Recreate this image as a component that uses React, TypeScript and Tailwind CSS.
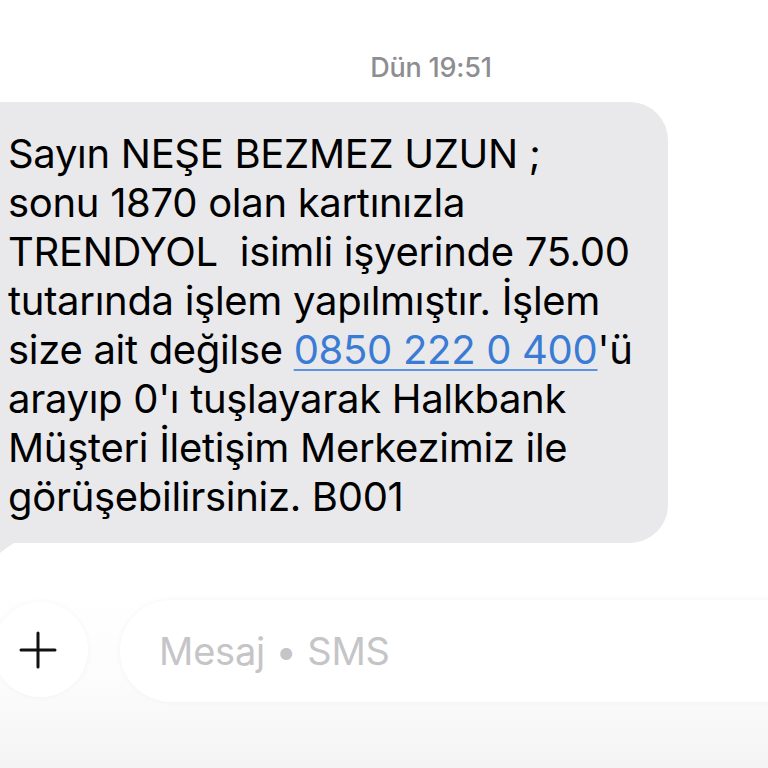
import React from "react";

const lines: React.ReactNode[] = [
  "Sayın NEŞE BEZMEZ UZUN ;",
  "sonu 1870 olan kartınızla",
  "TRENDYOL  isimli işyerinde 75.00",
  "tutarında işlem yapılmıştır. İşlem",
  <>
    size ait değilse{" "}
    <span className="text-[#3a7bd5] underline decoration-[2px] underline-offset-[5px] decoration-[#5b93e0]">
      0850 222 0 400
    </span>
    'ü
  </>,
  "arayıp 0'ı tuşlayarak Halkbank",
  "Müşteri İletişim Merkezimiz ile",
  "görüşebilirsiniz. B001",
];

export default function App() {
  return (
    <div
      className="relative w-[768px] h-[768px] overflow-hidden bg-white flex flex-col"
      style={{ fontFamily: 'Inter, "Liberation Sans", Arial, sans-serif' }}
    >
      <div className="pt-[50px] h-[102px] flex justify-center pl-[94px]">
        <span className="text-[27px] leading-[36px] font-medium text-[#8d8d92] tracking-[-0.2px]">
          Dün 19:51
        </span>
      </div>

      <div className="relative">
        <div className="ml-[-40px] w-[708px] bg-[#e9e9eb] rounded-[38px] pl-[48px] pt-[27px] pb-[22px]">
          {lines.map((l, i) => (
            <div
              key={i}
              className="whitespace-pre text-[40px] leading-[49px] text-black tracking-[-0.3px]"
            >
              {l}
            </div>
          ))}
        </div>
        <svg
          className="absolute left-0 bottom-[-14px]"
          width="28"
          height="20"
          viewBox="0 0 28 20"
        >
          <path d="M0 0 H28 C18 2 8 10 0 16 Z" fill="#e9e9eb" />
        </svg>
      </div>

      <div className="mt-auto h-[178px] bg-gradient-to-b from-[#ffffff] via-[#fcfcfc] to-[#f4f4f4] flex items-start pt-[12px]">
        <div className="ml-[-7px] w-[95px] h-[95px] rounded-full bg-white shadow-[0_0_6px_rgba(0,0,0,0.04)] flex items-center justify-center shrink-0">
          <svg width="38" height="38" viewBox="0 0 38 38" className="ml-[-5px]">
            <path
              d="M19 2 V36 M2 19 H36"
              stroke="#111"
              strokeWidth="3"
              strokeLinecap="round"
            />
          </svg>
        </div>
        <div className="ml-[32px] mt-[-2px] flex-1 mr-[-60px] h-[102px] rounded-full bg-white shadow-[0_0_6px_rgba(0,0,0,0.04)] flex items-center pl-[39px]">
          <span className="text-[38px] text-[#c5c5c7] tracking-[-0.2px]">Mesaj • SMS</span>
        </div>
      </div>
    </div>
  );
}
